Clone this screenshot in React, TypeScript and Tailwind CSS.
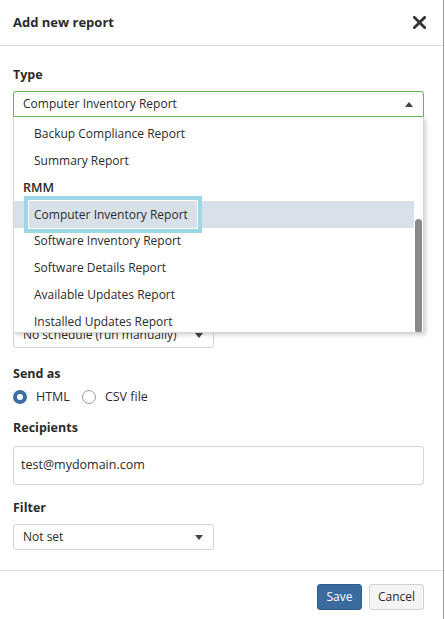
import type { ReactNode } from 'react';

const font = { fontFamily: '"Open Sans", "Liberation Sans", sans-serif' };

function Caret({ up = false }: { up?: boolean }) {
  return (
    <svg width="8" height="5" viewBox="0 0 8 5" className="shrink-0">
      {up ? <path d="M0 5 L4 0 L8 5 Z" fill="#444" /> : <path d="M0 0 L8 0 L4 5 Z" fill="#444" />}
    </svg>
  );
}

function Label({ children, className = '' }: { children?: ReactNode; className?: string }) {
  return <div className={`h-5 pt-[2px] text-[12.5px] leading-[18px] font-bold text-[#2b2b2b] ${className}`}>{children}</div>;
}

function Select({ value, className = '' }: { value: string; className?: string }) {
  return (
    <div
      className={`flex h-[26px] w-[201px] items-center justify-between rounded-[3px] border border-[#d4d4d4] bg-white pr-[10px] pl-[9px] text-[12px] text-[#2b2b2b] ${className}`}
    >
      <span>{value}</span>
      <Caret />
    </div>
  );
}

const before = ['Backup Compliance Report', 'Summary Report'];
const rmm = ['Software Inventory Report', 'Software Details Report', 'Available Updates Report', 'Installed Updates Report'];

function Dropdown() {
  return (
    <div className="absolute top-full right-0 left-0 z-10 h-[216px] overflow-hidden border border-t-0 border-[#d6d6d6] bg-white pt-[4px] shadow-[2px_2px_4px_rgba(0,0,0,0.18)]">
      <div className="mr-[9px]">
        {before.map((item) => (
          <div key={item} className="flex h-[26.75px] items-center pl-[20px] text-[12px] text-[#2b2b2b]">
            {item}
          </div>
        ))}
        <div className="flex h-[26.75px] items-center pl-[9px] text-[12.5px] font-semibold text-[#2b2b2b]">RMM</div>
        <div className="flex h-[26.75px] items-center bg-[#d8e1ea] pl-[14px] text-[12px] text-[#2b2b2b]">
          <span className="flex h-[29px] items-center border border-white pr-[9px] pl-[5px] ring-4 ring-[#9dd6e7]">
            Computer Inventory Report
          </span>
        </div>
        {rmm.map((item) => (
          <div key={item} className="flex h-[26.75px] items-center pl-[20px] text-[12px] text-[#2b2b2b]">
            {item}
          </div>
        ))}
      </div>
      <div className="absolute top-[102px] right-[1px] h-[114px] w-[7px] rounded-full bg-[#898989]" />
    </div>
  );
}

export default function App() {
  return (
    <div className="min-h-[619px] w-[444px] border-r border-[#9c9c9c] bg-white text-[#2b2b2b]" style={font}>
      <div className="flex h-[46px] items-center justify-between border-b border-[#dedede] pr-[17px] pl-[13px]">
        <h1 className="text-[13px] font-bold text-[#2b2b2b]">Add new report</h1>
        <svg width="13" height="13" viewBox="0 0 13 13" className="-mt-px">
          <path d="M1.4 1.4 L11.6 11.6 M11.6 1.4 L1.4 11.6" stroke="#333" strokeWidth="2.8" strokeLinecap="square" />
        </svg>
      </div>

      <div className="pt-[18px] pr-[19px] pb-[20px] pl-[13px]">
        <Label>Type</Label>
        <div className="relative mt-[7px]">
          <div className="flex h-[26px] items-center justify-between rounded-t-[3px] border border-[#5cb85c] bg-white pr-[10px] pl-[9px] text-[12px] text-[#2b2b2b]">
            <span>Computer Inventory Report</span>
            <Caret up />
          </div>
          <Dropdown />
        </div>

        {/* fields hidden behind the open list */}
        <Label className="mt-[13px]" />
        <div className="mt-[7px] h-[39px] rounded-[3px] border border-[#d4d4d4]" />
        <Label className="mt-[13px]" />
        <div className="mt-[7px] h-[46px] rounded-[3px] border border-[#d4d4d4]" />
        <Label className="mt-[13px]" />
        <Select value="No schedule (run manually)" className="mt-[7px]" />

        <Label className="mt-[15px]">Send as</Label>
        <div className="mt-[4px] flex h-5 items-center text-[12.5px] text-[#2b2b2b]">
          <span className="h-[14px] w-[14px] rounded-full border-[4px] border-[#3b6ea5] bg-white" />
          <span className="ml-[9px]">HTML</span>
          <span className="ml-[12px] h-[14px] w-[14px] rounded-full border border-[#9a9a9a] bg-white" />
          <span className="ml-[9px]">CSV file</span>
        </div>

        <Label className="mt-[10px]">Recipients</Label>
        <div className="mt-[9px] flex h-[39px] items-center rounded-[3px] border border-[#d4d4d4] pl-[7px] text-[12.5px] text-[#2b2b2b]">
          test@mydomain.com
        </div>

        <Label className="mt-[12px]">Filter</Label>
        <Select value="Not set" className="mt-[7px]" />
      </div>

      <div className="flex justify-end gap-[7px] border-t border-[#e2e2e2] pt-[13px] pr-[19px]">
        <button className="h-[26px] w-[45px] rounded-[3px] border border-[#2f5d8d] bg-[#3b6b9e] text-[12px] text-white">
          Save
        </button>
        <button className="h-[26px] w-[55px] rounded-[3px] border border-[#d2d2d2] bg-[#f4f4f4] text-[12px] text-[#2b2b2b]">
          Cancel
        </button>
      </div>
    </div>
  );
}
